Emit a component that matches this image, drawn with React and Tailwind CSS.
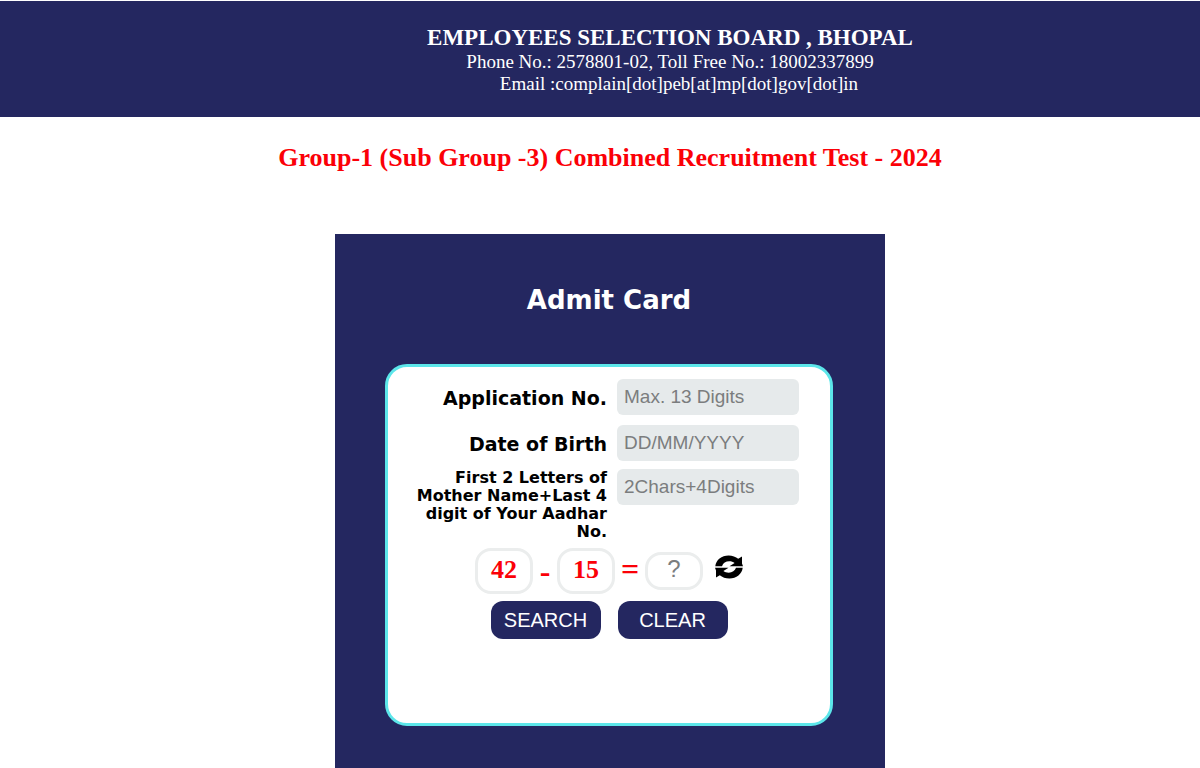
import { useState } from "react";

const FIELDS = [
  { id: "appNo", label: "Application No.", hint: "Max. 13 Digits", row: "mb-2", text: "text-[19px] leading-[38px]" },
  { id: "dob", label: "Date of Birth", hint: "DD/MM/YYYY", row: "mb-[6px]", text: "text-[19px] leading-[38px]" },
  {
    id: "aadhar",
    label: "First 2 Letters of Mother Name+Last 4 digit of Your Aadhar No.",
    hint: "2Chars+4Digits",
    row: "mb-[7px]",
    text: "text-base leading-[18px]",
  },
];

function RefreshIcon() {
  return (
    <svg viewBox="0 0 28 24" className="h-6 w-7" fill="currentColor" aria-hidden="true">
      <path d="M0.3 11.2C0.9 5 6.6 0.5 13.6 0.5C17.4 0.5 20.8 1.8 23.2 3.8L27 1.6V8.6L28 11.2H14.5L19.6 8C18.2 6.9 16.4 6.3 14.2 6.3C10.8 6.3 8 8.2 7 11.2Z" />
      <path d="M27.7 12.8C27.1 19 21.4 23.5 14.4 23.5C10.6 23.5 7.2 22.2 4.8 20.2L1 22.4V15.4L0 12.8H13.5L8.4 16C9.8 17.1 11.6 17.7 13.8 17.7C17.2 17.7 20 15.8 21 12.8Z" />
    </svg>
  );
}

function Header() {
  return (
    <header className="mt-px bg-[#242760] pt-6 pb-[22px] pl-[140px] text-center font-['Liberation_Serif',serif] text-white">
      <h1 className="text-[23px] leading-[26px] font-bold">EMPLOYEES SELECTION BOARD , BHOPAL</h1>
      <p className="text-[19px] leading-[22px]">Phone No.: 2578801-02, Toll Free No.: 18002337899</p>
      <p className="pl-[18px] text-[19px] leading-[22px]">Email :complain[dot]peb[at]mp[dot]gov[dot]in</p>
    </header>
  );
}

export default function App() {
  const [values, setValues] = useState({ appNo: "", dob: "", aadhar: "" });
  const [answer, setAnswer] = useState("");

  const clear = () => {
    setValues({ appNo: "", dob: "", aadhar: "" });
    setAnswer("");
  };

  return (
    <div className="flex h-screen flex-col overflow-hidden bg-white">
      <Header />
      <main className="flex grow flex-col items-center pl-5">
        <h2 className="mt-[26px] mb-[61px] font-['Liberation_Serif',serif] text-[26px] leading-[30px] font-bold text-[#fb0007]">
          Group-1 (Sub Group -3) Combined Recruitment Test - 2024
        </h2>

        <section className="w-full max-w-[550px] grow bg-[#242760] pt-[50px] pr-[52px] pl-[50px]">
          <h3 className="mb-12 text-center font-['DejaVu_Sans',sans-serif] text-[26px] leading-8 font-bold text-white">
            Admit Card
          </h3>

          <form
            className="min-h-[362px] rounded-[22px] border-3 border-[#5ce6ea] bg-white pt-3"
            onSubmit={(e) => e.preventDefault()}
          >
            {FIELDS.map((f) => (
              <div key={f.id} className={`flex items-start gap-[10px] pr-[31px] pl-5 ${f.row}`}>
                <label htmlFor={f.id} className={`grow basis-0 text-right font-['DejaVu_Sans',sans-serif] font-bold text-black ${f.text}`}>
                  {f.label}
                </label>
                <input
                  id={f.id}
                  type="text"
                  placeholder={f.hint}
                  value={values[f.id]}
                  onChange={(e) => setValues({ ...values, [f.id]: e.target.value })}
                  className="h-9 w-[182px] rounded-md bg-[#e6eaeb] px-[7px] font-['Liberation_Sans',sans-serif] text-[19px] text-black placeholder:text-[#7b7d7e]"
                />
              </div>
            ))}

            {/* captcha */}
            <div className="flex items-center justify-center font-['Liberation_Serif',serif] text-[26px] font-bold text-[#fb0007]">
              <span className="flex h-[46px] w-[58px] items-center justify-center rounded-2xl border-3 border-[#ebeded] pb-1">42</span>
              <span className="w-6 text-center text-[32px] leading-10">-</span>
              <span className="flex h-[46px] w-[58px] items-center justify-center rounded-2xl border-3 border-[#ebeded] pb-1">15</span>
              <span className="w-[30px] pb-1 text-center text-[32px] leading-10">=</span>
              <input
                type="text"
                aria-label="Answer"
                placeholder="?"
                value={answer}
                onChange={(e) => setAnswer(e.target.value)}
                className="h-[38px] w-[58px] rounded-2xl border-3 border-[#ebeded] pb-1 text-center font-['Liberation_Sans',sans-serif] text-2xl font-normal text-black placeholder:text-[#7b7d7e]"
              />
              <button type="button" aria-label="Refresh" className="mb-2 ml-3 text-black">
                <RefreshIcon />
              </button>
            </div>

            <div className="mt-[7px] flex justify-center gap-[17px] font-['Liberation_Sans',sans-serif] text-xl text-white">
              <button type="submit" className="h-[38px] w-[110px] rounded-xl bg-[#242760]">SEARCH</button>
              <button type="button" onClick={clear} className="h-[38px] w-[110px] rounded-xl bg-[#242760]">CLEAR</button>
            </div>
          </form>
        </section>
      </main>
    </div>
  );
}
